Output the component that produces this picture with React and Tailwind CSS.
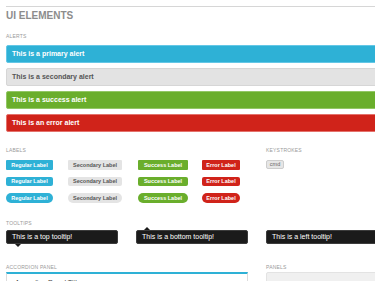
const ALERTS = [
  { text: 'This is a primary alert', cls: 'bg-[#2eb1d6] border-[#64c7e6] text-white' },
  { text: 'This is a secondary alert', cls: 'bg-[#e3e3e3] border-[#d6d6d6] text-[#555]' },
  { text: 'This is a success alert', cls: 'bg-[#6aae2c] border-[#93c765] text-white' },
  { text: 'This is an error alert', cls: 'bg-[#d0231a] border-[#e4726c] text-white' },
]

const LABELS = [
  { text: 'Regular Label', cls: 'bg-[#2eb1d6] text-white', w: 'w-[47px]', col: 'w-[62px]' },
  { text: 'Secondary Label', cls: 'bg-[#e4e4e4] text-[#555]', w: 'w-[54px]', col: 'w-[70px]' },
  { text: 'Success Label', cls: 'bg-[#6aae2c] text-white', w: 'w-[50px]', col: 'w-[64px]' },
  { text: 'Error Label', cls: 'bg-[#d0231a] text-white', w: 'w-[38px]', col: 'w-[40px]' },
]

const RADII = ['rounded-[1px]', 'rounded-[2px]', 'rounded-full']

function SectionTitle({ children, className = '' }) {
  return (
    <p className={`text-[5px] leading-[6px] uppercase tracking-[0.2px] text-[#9a9a9a] ${className}`}>
      {children}
    </p>
  )
}

function Tooltip({ children, arrow }) {
  return (
    <div className="relative h-[14px] rounded-[2px] bg-[#1b1b1b] border border-[#3c3c3c] flex items-center pl-[5px] text-[7px] text-white whitespace-nowrap">
      {children}
      {arrow === 'down' && (
        <span className="absolute left-[8px] bottom-[-4px] w-0 h-0 border-l-[3px] border-r-[3px] border-t-[3px] border-l-transparent border-r-transparent border-t-[#1b1b1b]" />
      )}
      {arrow === 'up' && (
        <span className="absolute left-[7px] top-[-4px] w-0 h-0 border-l-[3px] border-r-[3px] border-b-[3px] border-l-transparent border-r-transparent border-b-[#1b1b1b]" />
      )}
    </div>
  )
}

export default function App() {
  return (
    <div className="w-[375px] h-[281px] overflow-hidden bg-white font-['Liberation_Sans',Arial,sans-serif]">
      <div className="pl-[6px] pt-[6px] w-[390px]">
        <div className="border-t border-[#d6d6d6]" />
        <h1 className="mt-[3px] text-[10px] leading-[12px] font-bold text-[#8c8c8c]">UI ELEMENTS</h1>

        <SectionTitle className="mt-[11px]">Alerts</SectionTitle>
        <div className="mt-[6px] flex flex-col gap-[5px]">
          {ALERTS.map(a => (
            <div key={a.text} className={`h-[18px] border rounded-[2px] flex items-center pl-[5px] text-[7px] font-bold ${a.cls}`}>
              {a.text}
            </div>
          ))}
        </div>

        <div className="grid grid-cols-[112px_112px_112px] gap-x-[18px]">
          {/* Labels */}
          <div className="col-span-2">
            <SectionTitle className="mt-[15px]">Labels</SectionTitle>
            <div className="mt-[7px] flex flex-col gap-[7px]">
              {RADII.map(r => (
                <div key={r} className="flex h-[9.5px]">
                  {LABELS.map(l => (
                    <div key={l.text} className={l.col}>
                      <span className={`${l.w} h-[9.5px] flex items-center justify-center text-[5.5px] font-bold whitespace-nowrap ${r} ${l.cls}`}>
                        {l.text}
                      </span>
                    </div>
                  ))}
                </div>
              ))}
            </div>
          </div>

          {/* Keystrokes */}
          <div>
            <SectionTitle className="mt-[15px]">Keystrokes</SectionTitle>
            <div className="mt-[7px] flex items-center justify-center w-[18px] h-[9px] rounded-[2px] bg-[#e6e6e6] border border-[#cdcdcd] text-[5.5px] leading-none text-[#666]">
              cmd
            </div>
          </div>

          {/* Tooltips */}
          <SectionTitle className="col-span-3 mt-[17.5px]">Tooltips</SectionTitle>
          <div className="mt-[4px]"><Tooltip arrow="down">This is a top tooltip!</Tooltip></div>
          <div className="mt-[4px]"><Tooltip arrow="up">This is a bottom tooltip!</Tooltip></div>
          <div className="mt-[4px]"><Tooltip>This is a left tooltip!</Tooltip></div>

          {/* Accordion */}
          <div className="col-span-2">
            <SectionTitle className="mt-[20px]">Accordion Panel</SectionTitle>
            <div className="mt-[2px] border border-[#dcdcdc] border-t-2 border-t-[#2eb1d6] h-[30px] pl-[8px] pt-[4px] text-[7px] leading-[9px] text-[#444]">
              Accordion Panel Title
            </div>
          </div>

          {/* Panels */}
          <div>
            <SectionTitle className="mt-[20px]">Panels</SectionTitle>
            <div className="mt-[2px] h-[30px] bg-[#f0f0f0] border border-[#e3e3e3] rounded-[2px]" />
          </div>
        </div>
      </div>
    </div>
  )
}
